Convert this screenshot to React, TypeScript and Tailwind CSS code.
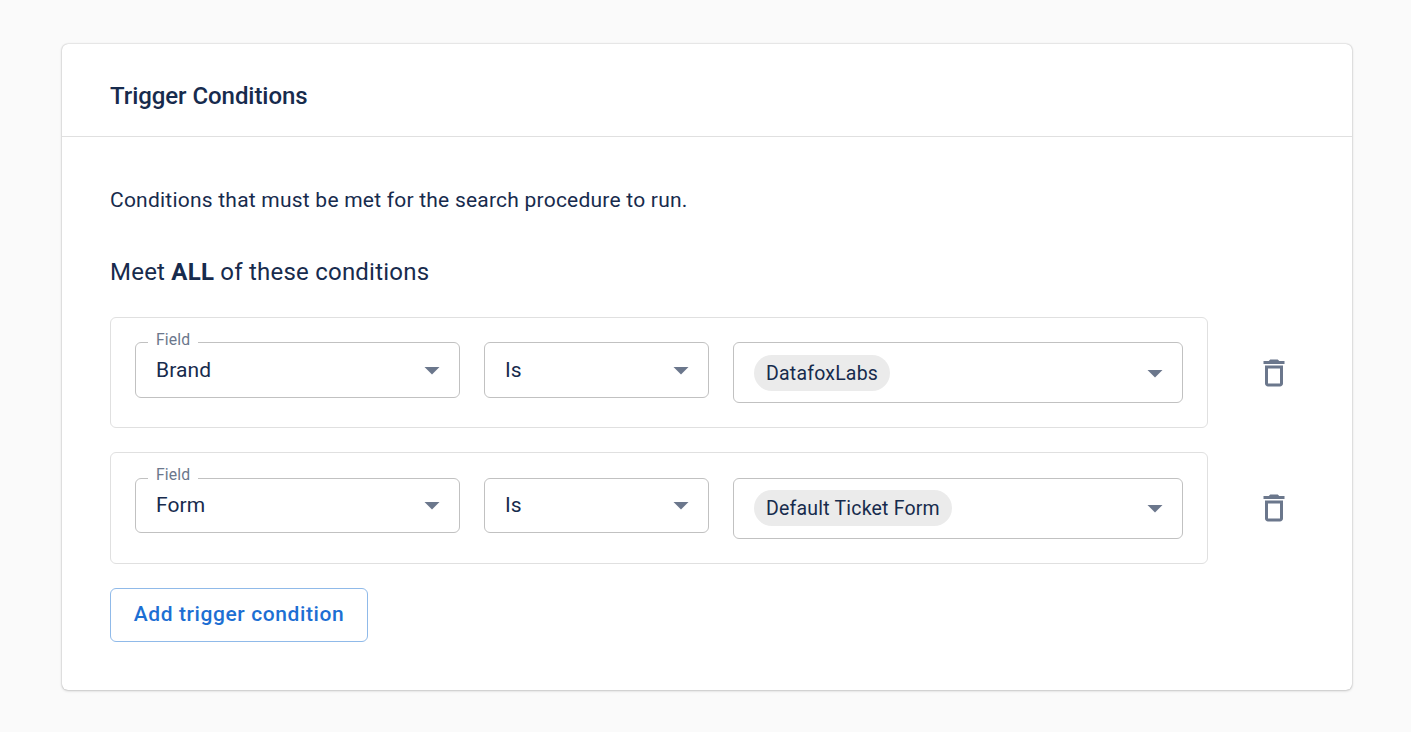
import React from "react";

type Condition = { field: string; operator: string; value: string };

const conditions: Condition[] = [
  { field: "Brand", operator: "Is", value: "DatafoxLabs" },
  { field: "Form", operator: "Is", value: "Default Ticket Form" },
];

function Arrow() {
  return (
    <svg viewBox="0 0 24 24" className="size-9 shrink-0 fill-[#6b778c]">
      <path d="M7 10l5 5 5-5z" />
    </svg>
  );
}

function TrashIcon() {
  return (
    <svg viewBox="0 0 24 24" className="size-9 fill-[#6b778c]">
      <path d="M6 19c0 1.1.9 2 2 2h8c1.1 0 2-.9 2-2V7H6v12zM8 9h8v10H8V9zm7.5-5l-1-1h-5l-1 1H5v2h14V4z" />
    </svg>
  );
}

function ConditionRow({ condition, last }: { condition: Condition; last: boolean }) {
  const box = last ? "h-[112px] pt-[25px]" : "h-[111px] pt-6";
  const select = last ? "h-[55px] pb-[1px]" : "h-14";
  return (
    <div className="flex">
      <div className={`flex w-[1098px] items-start gap-6 rounded-[6px] border border-[#e0e0e0] px-6 ${box}`}>
        <div
          className={`relative flex w-[325px] items-center justify-between rounded-[6px] border border-[#c1c1c1] pr-[9px] pl-5 ${select}`}
        >
          <span
            className={`absolute left-3 bg-white px-2 text-[15.75px] leading-5 tracking-[0.15px] text-[#6b778c] ${last ? "-top-[14px]" : "-top-[13px]"}`}
          >
            Field
          </span>
          <span className="text-[21px] leading-7 tracking-[0.1px]">{condition.field}</span>
          <Arrow />
        </div>
        <div
          className={`flex w-[225px] items-center justify-between rounded-[6px] border border-[#c1c1c1] pr-[9px] pl-5 ${select}`}
        >
          <span className="text-[21px] leading-7 tracking-[0.1px]">{condition.operator}</span>
          <Arrow />
        </div>
        <div
          className={`flex h-[61px] w-[450px] items-center justify-between rounded-[6px] border border-[#c1c1c1] pr-[9px] pl-5 ${last ? "pb-[1px]" : ""}`}
        >
          <span className="flex h-9 items-center rounded-full bg-[#ebebeb] px-3 pt-[2px] text-[19.5px] tracking-[0.2px]">
            {condition.value}
          </span>
          <Arrow />
        </div>
      </div>
      <button aria-label="Delete condition" className="mt-[38px] ml-12 size-9">
        <TrashIcon />
      </button>
    </div>
  );
}

export default function App() {
  return (
    <div className="h-[732px] w-[1411px] bg-[#fafafa] px-[62px] pt-11 font-['Roboto',sans-serif] text-[#172b4d]">
      <section className="h-[646px] w-[1290px] rounded-[6px] bg-white shadow-[0_0_1.5px_rgba(0,0,0,0.31),0_1px_3px_rgba(0,0,0,0.16)]">
        <header className="flex h-[93px] items-center border-b border-[#e0e0e0] px-12 pt-3">
          <h2 className="text-[24px] leading-9 font-medium tracking-[-0.06px]">Trigger Conditions</h2>
        </header>
        <div className="px-12 pt-12">
          <p className="text-[21px] leading-[30px] tracking-[0.225px]">
            Conditions that must be met for the search procedure to run.
          </p>
          <h3 className="mt-[39px] text-[24px] leading-9 tracking-[0.225px]">
            Meet <b className="font-bold">ALL</b> of these conditions
          </h3>
          <div className="mt-[27px] flex flex-col gap-6">
            {conditions.map((condition, index) => (
              <ConditionRow key={condition.field} condition={condition} last={index === 1} />
            ))}
          </div>
          <button className="mt-6 flex h-[54px] w-[258px] items-center justify-center rounded-[6px] border border-[#90bae9] text-[21px] font-medium tracking-[0.6px] text-[#1d6fd3]">
            Add trigger condition
          </button>
        </div>
      </section>
    </div>
  );
}
